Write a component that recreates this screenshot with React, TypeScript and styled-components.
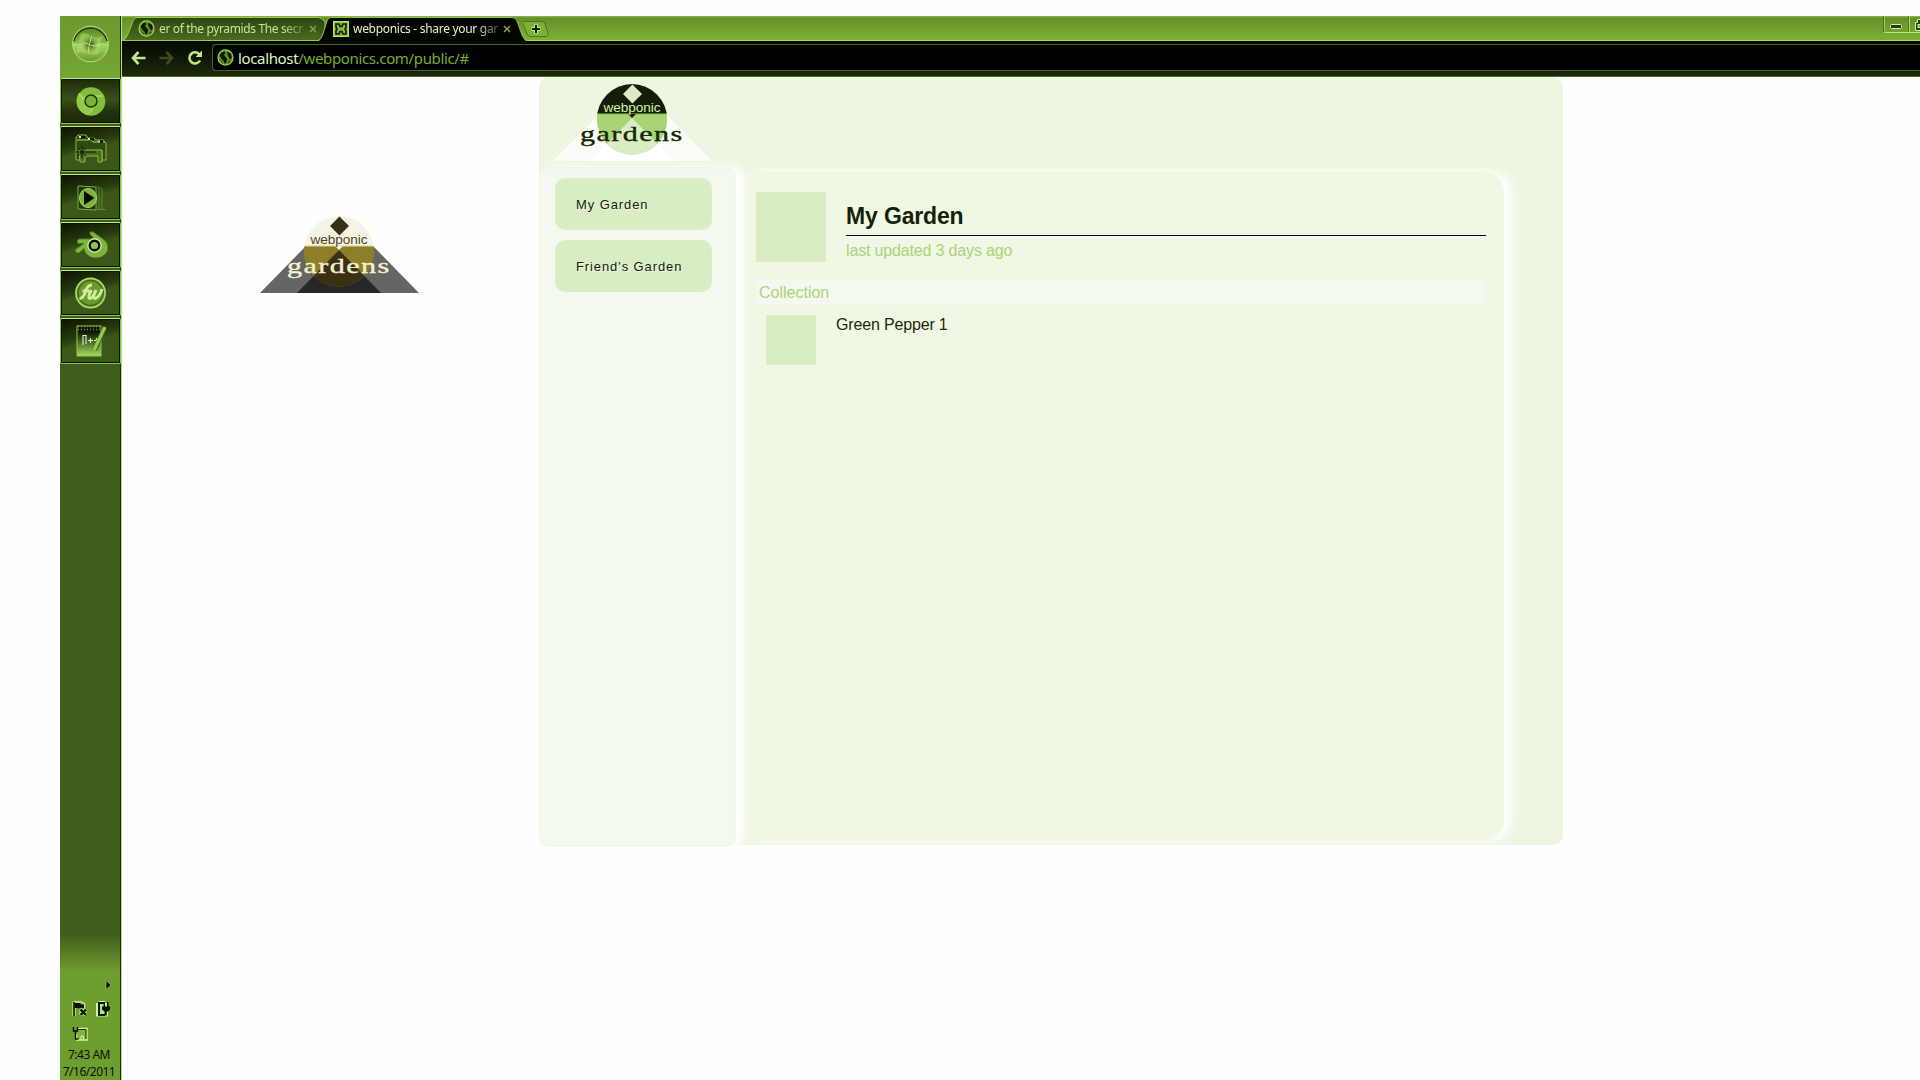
import React from "react";
import styled, { createGlobalStyle } from "styled-components";

const Global = createGlobalStyle`
  html, body { margin: 0; padding: 0; background: #fefefe; overflow: hidden; }
  * { box-sizing: border-box; }
  svg { display: block; flex: none; }
`;

const ui = `"Noto Sans", "Open Sans", sans-serif`;
const arial = `"Liberation Sans", Arial, sans-serif`;

const Desktop = styled.div`
  width: 1920px;
  height: 1080px;
  padding: 16px 0 0 60px;
  display: flex;
  overflow: hidden;
  background: #fefefe;
`;

/* ---------- taskbar ---------- */
const Taskbar = styled.aside`
  width: 62px;
  height: 1064px;
  display: flex;
  flex-direction: column;
  background: linear-gradient(#415d1b 0, #415d1b 918px, #6f9e30 956px, #6f9e30 100%);
  border-right: 1px solid #b5e07c;
  box-shadow: inset -1px 0 0 #1d2b0a;
`;
const Start = styled.div`
  height: 62px;
  width: 60px;
  padding: 9px 0 0 12px;
  background: linear-gradient(#6c9a2e, #75a534);
`;
const Apps = styled.div`
  display: flex;
  flex-direction: column;
  gap: 2px;
`;
const AppButton = styled.div<{ $active?: boolean }>`
  height: 46px;
  width: 61px;
  border: 1px solid #8fc54a;
  border-top-color: #c3ea8e;
  border-radius: 2px;
  box-shadow: inset 0 0 0 1px #0c1403;
  display: flex;
  align-items: center;
  justify-content: center;
  background: ${(p) =>
    p.$active
      ? "linear-gradient(#1c2a0a 0, #38511a 45%, #22330c 75%, #1a2808 100%)"
      : "linear-gradient(165deg, #0c1303 0, #263a0e 38%, #3b5719 52%, #3b5719 100%)"};
`;
const Tray = styled.div`
  margin-top: auto;
  width: 60px;
  height: 99px;
  display: flex;
  flex-direction: column;
`;
const Clock = styled.div`
  font: 12px/17px ${ui};
  letter-spacing: -0.5px;
  color: #0b1202;
  text-align: center;
  width: 58px;
  white-space: nowrap;
`;

/* ---------- browser ---------- */
const Browser = styled.main`
  flex: 1;
  min-width: 0;
  display: flex;
  flex-direction: column;
`;
const TabStrip = styled.div`
  height: 25px;
  display: flex;
  background: linear-gradient(#8abf45 0, #668f2b 2px, #7bb033 23px);
  border-bottom: 1px solid #a3dc58;
`;
const Tab = styled.div<{ $w: number; $ml?: number; $pl: number; $color: string }>`
  position: relative;
  width: ${(p) => p.$w}px;
  height: 25px;
  margin-left: ${(p) => p.$ml || 0}px;
  padding-left: ${(p) => p.$pl}px;
  display: flex;
  align-items: center;
  color: ${(p) => p.$color};
  font: 12px/16px ${ui};
`;
const TabShape = styled.svg`
  position: absolute;
  left: 0;
  top: 0;
`;
const TabLabel = styled.span<{ $ls: number }>`
  position: relative;
  width: 150px;
  margin-left: 4px;
  overflow: hidden;
  white-space: nowrap;
  letter-spacing: ${(p) => p.$ls}px;
  mask-image: linear-gradient(90deg, #000 82%, rgba(0, 0, 0, 0.25) 97%);
`;
const TabIcon = styled.svg`
  position: relative;
`;
const NewTab = styled(TabIcon)`
  margin-left: -3px;
`;
const Controls = styled.div`
  margin-left: auto;
  width: 37px;
  height: 17px;
  display: flex;
  border-left: 1px solid #466a18;
  border-bottom: 1px solid #b7e77a;
  box-shadow: inset 1px 0 0 #a2d45d;
  border-radius: 0 0 0 3px;
`;
const Toolbar = styled.div`
  height: 36px;
  display: flex;
  align-items: center;
  padding: 0 0 2px 9px;
  background: linear-gradient(#040700, #1c290c);
  border-bottom: 1px solid #4c6f1e;
  gap: 13px;
`;
const Omnibox = styled.div`
  flex: 1;
  height: 27px;
  margin-left: -4px;
  border: 1px solid #44631c;
  border-right: 0;
  border-radius: 4px 0 0 4px;
  background: #000;
  display: flex;
  align-items: center;
  gap: 4px;
  padding-left: 4px;
`;
const Url = styled.span`
  font: 15px/20px ${ui};
  letter-spacing: -0.35px;
  color: #78ad35;
  white-space: nowrap;
`;
const Host = styled.span`
  color: #dff5c2;
`;

/* ---------- page ---------- */
const Viewport = styled.div`
  flex: 1;
  display: flex;
  align-items: flex-start;
  background: #fefefe;
`;
const Pasteboard = styled.div`
  width: 417px;
  padding: 138px 0 0 136px;
`;
const Container = styled.div`
  width: 1024px;
  height: 768px;
  border-radius: 10px;
  background: #eef6e2;
`;
const Header = styled.header`
  height: 90px;
  padding: 6px 0 0 12px;
`;
const Columns = styled.div`
  display: flex;
  align-items: flex-start;
`;
const SideNav = styled.nav`
  position: relative;
  z-index: 1;
  width: 197px;
  height: 680px;
  padding: 11px 0 0 16px;
  border-radius: 10px;
  background: #f3f9ee;
  box-shadow: 8px 0 8px #fff, inset 0 0 2px #e9f4da;
  display: flex;
  flex-direction: column;
  gap: 10px;
`;
const NavItem = styled.div`
  width: 157px;
  height: 52px;
  padding-left: 21px;
  border-radius: 10px;
  background: #d9ecc4;
  box-shadow: inset 0 0 2px #e6f3d5;
  font: 13px/53px ${arial};
  letter-spacing: 0.9px;
  color: #142203;
  text-shadow: 1px 1px 1px #f3faea;
`;
const Garden = styled.section`
  width: 768px;
  height: 668px;
  margin-top: 5px;
  padding: 20px 18px 0 20px;
  border-radius: 20px;
  background: #f0f7e5;
  box-shadow: 8px 0 10px #fff;
  font: 16px/20px ${arial};
  letter-spacing: -0.16px;
`;
const Profile = styled.div`
  display: flex;
  gap: 20px;
  height: 88px;
`;
const Thumb = styled.div<{ $size: number }>`
  width: ${(p) => p.$size}px;
  height: ${(p) => p.$size}px;
  background: #d9ecc4;
`;
const Info = styled.div`
  flex: 1;
`;
const Title = styled.h1`
  margin: 0;
  height: 44px;
  padding-top: 11px;
  border-bottom: 1px solid #000;
  font: bold 23px/26px ${arial};
  letter-spacing: -0.15px;
  color: #16210a;
`;
const Updated = styled.div`
  padding-top: 5px;
  color: #a9d475;
`;
const SectionBar = styled.div`
  width: 729px;
  height: 25px;
  padding-left: 3px;
  line-height: 25px;
  letter-spacing: 0;
  background: #f3f9ee;
  color: #a9d475;
`;
const Plant = styled.div`
  display: flex;
  gap: 20px;
  padding: 10px 0 0 10px;
  color: #1b2b08;
`;

type LogoColors = {
  outer: string; inner: string; cap: string; disc: string; glow: string;
  mark: string; web: string; word: string; line: string;
};
const pageLogo: LogoColors = {
  outer: "#fafcf6", inner: "#fff", cap: "#141d09", disc: "#a9d475", glow: "#d9ecc4",
  mark: "#d9ecc4", web: "#d5f3ad", word: "#182508", line: "#8cc63f",
};
const negativeLogo: LogoColors = {
  outer: "#656565", inner: "#272727", cap: "#f5f3e5", disc: "#8d7f2a", glow: "#393114",
  mark: "#393114", web: "#504715", word: "#f5f0cf", line: "#ddd59a",
};

function Logo({ c, id }: { c: LogoColors; id: string }) {
  return (
    <svg width="162" height="80" viewBox="0 0 162 80">
      <defs>
        <clipPath id={id}><circle cx="81" cy="36.3" r="35.2" /></clipPath>
      </defs>
      <path d="M2 78 L47 32 H116 L161 78Z" fill={c.outer} />
      <path d="M39 78 L81 35 L123 78Z" fill={c.inner} />
      <g clipPath={`url(#${id})`}>
        <rect x="40" y="0" width="82" height="31" fill={c.cap} />
        <rect x="40" y="31" width="82" height="45" fill={c.disc} />
        <path d="M39 78 L81 35 L123 78Z" fill={c.glow} />
        <rect x="40" y="30.500" width="82" height="1" fill={c.line} />
      </g>
      <path d="M77 31 H85 L81 35Z" fill={c.cap} />
      <path d="M81.400 1.500 L91 11 L81.400 20.500 L72 11Z" fill={c.mark} />
      <text x="52.500" y="28.500" textLength="57" fontSize="13.600" fontFamily="Liberation Sans" fill={c.web}>webponic</text>
      <text
        transform="translate(29 58) scale(1.4 1)" x="0" y="0" textLength="73"
        fontSize="21.500" fontWeight="400" fontFamily="Liberation Serif" fill={c.word}
        stroke={c.word} strokeWidth="0.35"
      >gardens</text>
    </svg>
  );
}

function Globe() {
  return (
    <TabIcon width="17" height="17" viewBox="0 0 16 16">
      <circle cx="8" cy="8" r="7.1" fill="#60902a" stroke="#9bd650" strokeWidth="1.1" />
      <path d="M2.500 6 L4 3.500 L7 2 L8 4 L6.500 5.500 L8 7.500 L9.500 9 L9 12 L7.500 14 L6 11 L4 9Z M10 2.500 L13 4.500 L14 7.500 L12.500 10 L11 7.500 L9.500 5Z" fill="#0f1904" />
      <path d="M2 9 L5 12 L5.500 14Z M11 11 L13 11 L10.500 14Z" fill="#24380e" />
    </TabIcon>
  );
}

function Close({ color }: { color: string }) {
  return (
    <TabIcon width="8" height="8" viewBox="0 0 8 8">
      <path d="M1 1 L7 7 M7 1 L1 7" stroke={color} strokeWidth="1.400" />
    </TabIcon>
  );
}

function StartOrb() {
  return (
    <svg width="38" height="38" viewBox="0 0 38 38">
      <defs>
        <linearGradient id="orb" x1="0" y1="0" x2="0" y2="1">
          <stop offset="0" stopColor="#55801f" /><stop offset=".46" stopColor="#83b945" />
          <stop offset=".5" stopColor="#a8da66" /><stop offset="1" stopColor="#6a992e" />
        </linearGradient>
        <radialGradient id="core"><stop stopColor="#1b2a0c" stopOpacity=".9" /><stop offset="1" stopColor="#659232" stopOpacity="0" /></radialGradient>
      </defs>
      <circle cx="18.500" cy="19" r="17.800" fill="url(#orb)" stroke="#b8e87b" strokeWidth="1" />
      <path d="M2 16 A17 17 0 0 1 35 16" fill="none" stroke="#253a0c" strokeWidth="1.400" />
      <path d="M9 9 Q13 7 18 10 L16.500 18.500 Q11 16 6 18Z M19 11 Q25 14 31 11 L28 19 Q22 21 18 19Z M6 20 Q11 17 16 20 L14 29 Q10 26 4 28Z M18 20 Q23 22 28 20 L26 29 Q21 31 16 28Z" fill="#b2e06f" opacity=".5" />
      <circle cx="18" cy="19.500" r="9" fill="url(#core)" />
      <path d="M19.500 11 Q17 19 16 28 M9 19 Q12 16.500 17.500 19.500 T28 19" stroke="#c9f291" fill="none" strokeWidth=".9" />
    </svg>
  );
}

function ChromeIcon() {
  return (
    <svg width="32" height="32" viewBox="0 0 32 32">
      <circle cx="16" cy="16.500" r="14.3" fill="#84bd3c" />
      <path d="M16 16 L4 8 A14.3 14.3 0 0 0 13 30 L20 20Z" fill="#91c94a" />
      <path d="M4 8 L12 19 M28 11 H17 M14 29 L21 19" stroke="#b8e57e" strokeWidth="1" />
      <circle cx="16" cy="16" r="6" fill="#7cb03b" stroke="#1f300a" strokeWidth="1.400" />
    </svg>
  );
}
function FoldersIcon() {
  return (
    <svg width="34" height="32" viewBox="0 0 34 32">
      <path d="M2 27 V4 L4 2 H12 L14 5 H20 L22 7 H29 L32 10 V27 H28 V18 H8 V27Z" fill="#314a14" stroke="#82bb3e" strokeWidth="1" />
      <path d="M3 7 H17 L19 9 H31" fill="none" stroke="#a2d45d" />
      <path d="M5 4 H11 M14 6 H20 M24 8.500 H29" stroke="#0b1302" strokeWidth="2.500" />
      <path d="M5 4 H7 M14 6 H16 M24 8.500 H26" stroke="#d9f4b7" strokeWidth="2" />
      <path d="M5 17 H28 V29 H24 V23 H11 V29 H6Z" fill="#4a6c20" stroke="#84bf3d" />
      <path d="M8 13 V25 M2 19 H22 M4 15 L12 23 M12 15 L4 23" stroke="#111b05" strokeWidth="1" />
    </svg>
  );
}
function MediaIcon() {
  return (
    <svg width="32" height="32" viewBox="0 0 32 32">
      <path d="M3 5 L21 6 V29 L3 28Z" fill="#24360d" stroke="#79b037" />
      <path d="M22 5 L24 7 V29 M25 6 L27 8 V28 M21 28.500 H31" fill="none" stroke="#5c8829" />
      <ellipse cx="13" cy="17" rx="8.500" ry="9.500" fill="#7cb33a" stroke="#a9dc65" />
      <path d="M9 10 L19.500 17 L9 24Z" fill="#070c02" />
    </svg>
  );
}
function BlenderIcon() {
  return (
    <svg width="34" height="30" viewBox="0 0 34 30">
      <path d="M16 4 Q15 1 19 2 L29 9 A12 10.500 0 1 1 10 18.500 L5 23 Q0 23 2 19 L10 13.500 H4 Q2 9 6 9 H18 L19 7.500Z" fill="#7db63b" stroke="#4f7822" />
      <circle cx="20.500" cy="15.500" r="7.200" fill="#dcf5bc" />
      <circle cx="20.500" cy="15.500" r="4.800" fill="#90c64a" stroke="#030600" strokeWidth="2.400" />
    </svg>
  );
}
function FireworksIcon() {
  return (
    <svg width="34" height="34" viewBox="0 0 34 34">
      <circle cx="16.500" cy="17" r="14.600" fill="#6b9a2e" stroke="#a9dd66" strokeWidth="1.600" />
      <circle cx="16.500" cy="17" r="12.500" fill="none" stroke="#456a1b" strokeWidth="1.500" />
      <path d="M5.500 22.500 Q9 22.500 11 17 Q13 9 18 9 M8.500 15 H15.500 M17.500 14 Q13 22 16 22.500 Q19 22 22 14 Q18 22 21 22.500 Q26 21 28 13" fill="none" stroke="#d0ef9e" strokeWidth="2.900" />
    </svg>
  );
}
function NotepadIcon() {
  return (
    <svg width="32" height="34" viewBox="0 0 32 34">
      <defs><linearGradient id="pad" x1="0" y1="0" x2="0" y2="1"><stop offset=".2" stopColor="#0d1603" /><stop offset="1" stopColor="#a5dc5e" /></linearGradient></defs>
      <rect x="2" y="2" width="24" height="30" fill="url(#pad)" stroke="#91c84c" />
      <path d="M3 2.500 H26 M3 5.500 H26" stroke="#6f9e30" strokeWidth="1.300" strokeDasharray="1 2" />
      <path d="M8 21 V11.500 H11 V20 M13 16.500 H18 M15.500 14 V19 M19 16.500 H24 M21.500 14 V19" fill="none" stroke="#daf6b5" strokeWidth="1.100" />
      <path d="M29.500 4 L19.500 26" stroke="#4a6d20" strokeWidth="4.600" />
      <path d="M30 3 L19 26" stroke="#94ce4b" strokeWidth="3" />
    </svg>
  );
}

function TrayIcons() {
  return (
    <svg width="60" height="65" viewBox="0 0 60 65">
      <path d="M46 -.5 L51 4 L46 8.500Z" fill="#0a1002" stroke="#a7d766" strokeWidth=".6" />
      <g transform="translate(12.500 20)">
        <path d="M.5 1 H9 L12 3 V8" fill="none" stroke="#c2ec8c" strokeWidth="1.500" />
        <path d="M1.500 1 V15" stroke="#c2ec8c" strokeWidth="3.400" />
        <path d="M1.500 1 V15" stroke="#0b1202" strokeWidth="1.600" />
        <path d="M2 2 H7.500 L8.500 3.500 H11.500 V7.500 H7 L6 7 H2Z" fill="#0b1202" />
        <path d="M7.500 8 L13.500 14 M13.500 8 L7.500 14" stroke="#b5e277" strokeWidth="4" />
        <path d="M8 8.500 L13.500 14 M13.500 8.500 L8 14" stroke="#0b1202" strokeWidth="2.300" />
      </g>
      <g transform="translate(36 20)">
        <path d="M1 3 H4 V1 H8 V3 H11 V14.500 H1Z" fill="#b5e277" stroke="#d3f4a6" strokeWidth="2" />
        <path d="M8 2 H3 V14 H9" fill="none" stroke="#0b1202" strokeWidth="2" />
        <path d="M6 5.500 H14 V8.500 L12 10.500 H10.800 V14.500 H8.500 V10.500 L6 8.500Z M7.500 1 H9 V5.500 H7.500Z M11 1 H12.500 V5.500 H11Z" fill="#0b1202" />
      </g>
      <g transform="translate(12.500 45)">
        <path d="M5 2.500 H14.500 V14 H4 V8" fill="#80b43e" stroke="#d3f4a6" strokeWidth="1.400" />
        <path d="M6 3.500 H13.500 V13" fill="none" stroke="#1c2d08" />
        <path d="M1 1 V5 H5 V1 M3 5 V13 H6" fill="none" stroke="#0b1202" strokeWidth="1.400" />
        <path d="M8.500 13.500 V10 H11 V13.500" fill="none" stroke="#d3f4a6" />
      </g>
    </svg>
  );
}

export default function App() {
  return (
    <Desktop>
      <Global />
      <Taskbar>
        <Start><StartOrb /></Start>
        <Apps>
          <AppButton $active><ChromeIcon /></AppButton>
          <AppButton><FoldersIcon /></AppButton>
          <AppButton><MediaIcon /></AppButton>
          <AppButton><BlenderIcon /></AppButton>
          <AppButton><FireworksIcon /></AppButton>
          <AppButton><NotepadIcon /></AppButton>
        </Apps>
        <Tray>
          <TrayIcons />
          <Clock>7:43 AM</Clock>
          <Clock>7/16/2011</Clock>
        </Tray>
      </Taskbar>

      <Browser>
        <TabStrip>
          <Tab $w={203} $pl={16} $color="#c3e894">
            <TabShape width="203" height="25" viewBox="0 0 203 25">
              <defs><linearGradient id="tab" x1="0" y1="0" x2="0" y2="1"><stop stopColor="#2e4411" /><stop offset="1" stopColor="#4b6c20" /></linearGradient></defs>
              <path d="M0 24.500 Q4 24 6 18 L11 5 Q12 1.500 15 1.500 H196 Q200 1.500 203 6 V24.500Z" fill="url(#tab)" stroke="#94cb4c" />
            </TabShape>
            <Globe />
            <TabLabel $ls={-0.36}>er of the pyramids The secr</TabLabel>
            <Close color="#80ad45" />
          </Tab>
          <Tab $w={208} $ml={-7} $pl={15} $color="#e2f6c9">
            <TabShape width="208" height="26" viewBox="0 0 208 26" overflow="visible">
              <path d="M0 25.500 Q3 24 5 18 L9 5 Q10 1.500 13 1.500 H194 Q198 1.500 199 5 L204 19 Q206 25 210 25.500Z" fill="#020400" />
              <path d="M0 24.500 Q3 24 5 18 L9 5 Q10 1.500 13 1.500 H194 Q198 1.500 199 5 L204 19 Q206 24 210 24.500" fill="none" stroke="#8dc147" />
            </TabShape>
            <TabIcon width="16" height="16" viewBox="0 0 16 16">
              <rect x=".7" y=".7" width="14.600" height="14.600" fill="#79b036" stroke="#b3e172" strokeWidth="1.400" />
              <path d="M3 3 H6 L7 5.500 H9 L10 3 H13 V6 L12 8 L13 10 V13 H10 L9 10.500 H7 L6 13 H3 V10 L4 8 L3 6Z" fill="#87bd45" stroke="#111c05" strokeWidth="1.600" />
            </TabIcon>
            <TabLabel $ls={-0.3}>webponics - share your gar</TabLabel>
            <Close color="#88ae58" />
          </Tab>
          <NewTab width="28" height="25" viewBox="0 0 28 25">
            <path d="M1 5.500 H18 Q21 5.500 22 8 L25 17 Q26 20.500 22 20.500 H8 Q5 20.500 4 18 L0 8 Q-1 5.500 1 5.500Z" fill="#7cb138" stroke="#4c7520" />
            <path d="M8.500 13 H17.500 M13 8.500 V17.500" stroke="#c2eb89" strokeWidth="4" />
            <path d="M9 13 H17 M13 9 V17" stroke="#14200a" strokeWidth="2" />
          </NewTab>
          <Controls>
            <svg width="36" height="16" viewBox="0 0 36 16">
              <path d="M24.500 0 V16" stroke="#527a20" /><path d="M25.500 0 V16" stroke="#a7d766" />
              <rect x="6.500" y="8.500" width="11" height="4" rx="1" fill="#283d0d" stroke="#d1f1a5" />
              <path d="M33.500 3.500 H40 V14.500 H31.500 V6.500 H33.500Z" fill="#283d0d" stroke="#d1f1a5" />
              <rect x="34" y="8.500" width="5" height="3" fill="#7cb138" stroke="#d1f1a5" />
            </svg>
          </Controls>
        </TabStrip>
        <Toolbar>
          <svg width="15" height="14" viewBox="0 0 15 14"><path d="M7.500 1 L2 7 L7.500 13 M2 7 H14.500" fill="none" stroke="#bfe98a" strokeWidth="2.600" /></svg>
          <svg width="15" height="14" viewBox="0 0 15 14"><path d="M7.500 1 L13 7 L7.500 13 M13 7 H.5" fill="none" stroke="#35501a" strokeWidth="2.600" /></svg>
          <svg width="16" height="16" viewBox="0 0 16 16"><path d="M12.500 4.500 A5.600 5.600 0 1 0 13 10.500" fill="none" stroke="#bfe98a" strokeWidth="2.600" /><path d="M15 .5 V7 H8.500Z" fill="#bfe98a" /></svg>
          <Omnibox>
            <Globe />
            <Url><Host>localhost</Host>/webponics.com/public/#</Url>
          </Omnibox>
        </Toolbar>
        <Viewport>
          <Pasteboard><Logo c={negativeLogo} id="disc-negative" /></Pasteboard>
          <Container>
            <Header><Logo c={pageLogo} id="disc-page" /></Header>
            <Columns>
              <SideNav>
                <NavItem>My Garden</NavItem>
                <NavItem>Friend's Garden</NavItem>
              </SideNav>
              <Garden>
                <Profile>
                  <Thumb $size={70} />
                  <Info>
                    <Title>My Garden</Title>
                    <Updated>last updated 3 days ago</Updated>
                  </Info>
                </Profile>
                <SectionBar>Collection</SectionBar>
                <Plant>
                  <Thumb $size={50} />
                  <span>Green Pepper 1</span>
                </Plant>
              </Garden>
            </Columns>
          </Container>
        </Viewport>
      </Browser>
    </Desktop>
  );
}
